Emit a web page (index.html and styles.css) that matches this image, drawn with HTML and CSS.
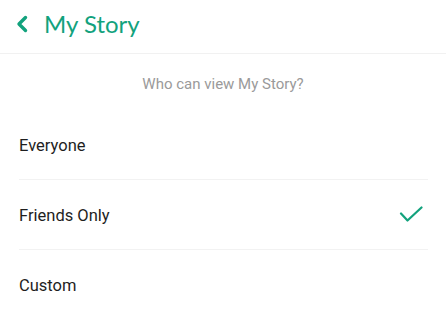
FILE: index.html
```html
<!DOCTYPE html>
<html>
<head>
<meta charset="utf-8">
<link rel="stylesheet" href="styles.css">
</head>
<body>
<header class="header">
  <svg class="back" width="14" height="18" viewBox="0 0 14 18"><path d="M10.5 2.5 L4 9 L10.5 15.5" fill="none" stroke="#12a27d" stroke-width="3.4" stroke-linecap="round" stroke-linejoin="round"/></svg>
  <h1 class="title">My Story</h1>
</header>
<p class="question">Who can view My Story?</p>
<ul class="options">
  <li class="option">Everyone</li>
  <li class="option selected">Friends Only
    <svg class="check" width="24" height="18" viewBox="0 0 24 18"><path d="M2 7.5 L8.5 14.5 L22.5 1.5" fill="none" stroke="#12a27d" stroke-width="2.2" stroke-linecap="round" stroke-linejoin="round"/></svg>
  </li>
  <li class="option">Custom</li>
</ul>
</body>
</html>
```
FILE: styles.css
```css
* { box-sizing: border-box; }
html, body { margin: 0; padding: 0; background: #fff; }
body { width: 446px; height: 316px; overflow: hidden; font-family: Roboto, "Liberation Sans", sans-serif; }
.header {
  height: 54px;
  display: flex;
  align-items: center;
  padding-left: 15px;
  border-bottom: 1px solid #f1f1f1;
}
.back { display: block; margin-top: -5px; }
.title {
  margin: 0 0 0 15px;
  font-family: Lato, "Noto Sans", sans-serif;
  font-weight: 400;
  font-size: 24px;
  color: #12a27d;
  line-height: 1;
  margin-top: -6px;
}
.question {
  margin: 0;
  height: 58px;
  display: flex;
  align-items: center;
  justify-content: center;
  font-size: 15px;
  color: #9a9a9a;
  padding-top: 2px;
}
.options { list-style: none; margin: 0; padding: 0 18px 0 19px; }
.option {
  height: 70px;
  display: flex;
  align-items: center;
  justify-content: space-between;
  font-size: 16.5px;
  color: #1e1e1e;
  border-bottom: 1px solid #f2f2f2;
  padding-top: 1px;
}
.option:first-child { height: 68px; padding-top: 0; }
.check { display: block; margin-right: 5px; margin-top: -1px; }
```
